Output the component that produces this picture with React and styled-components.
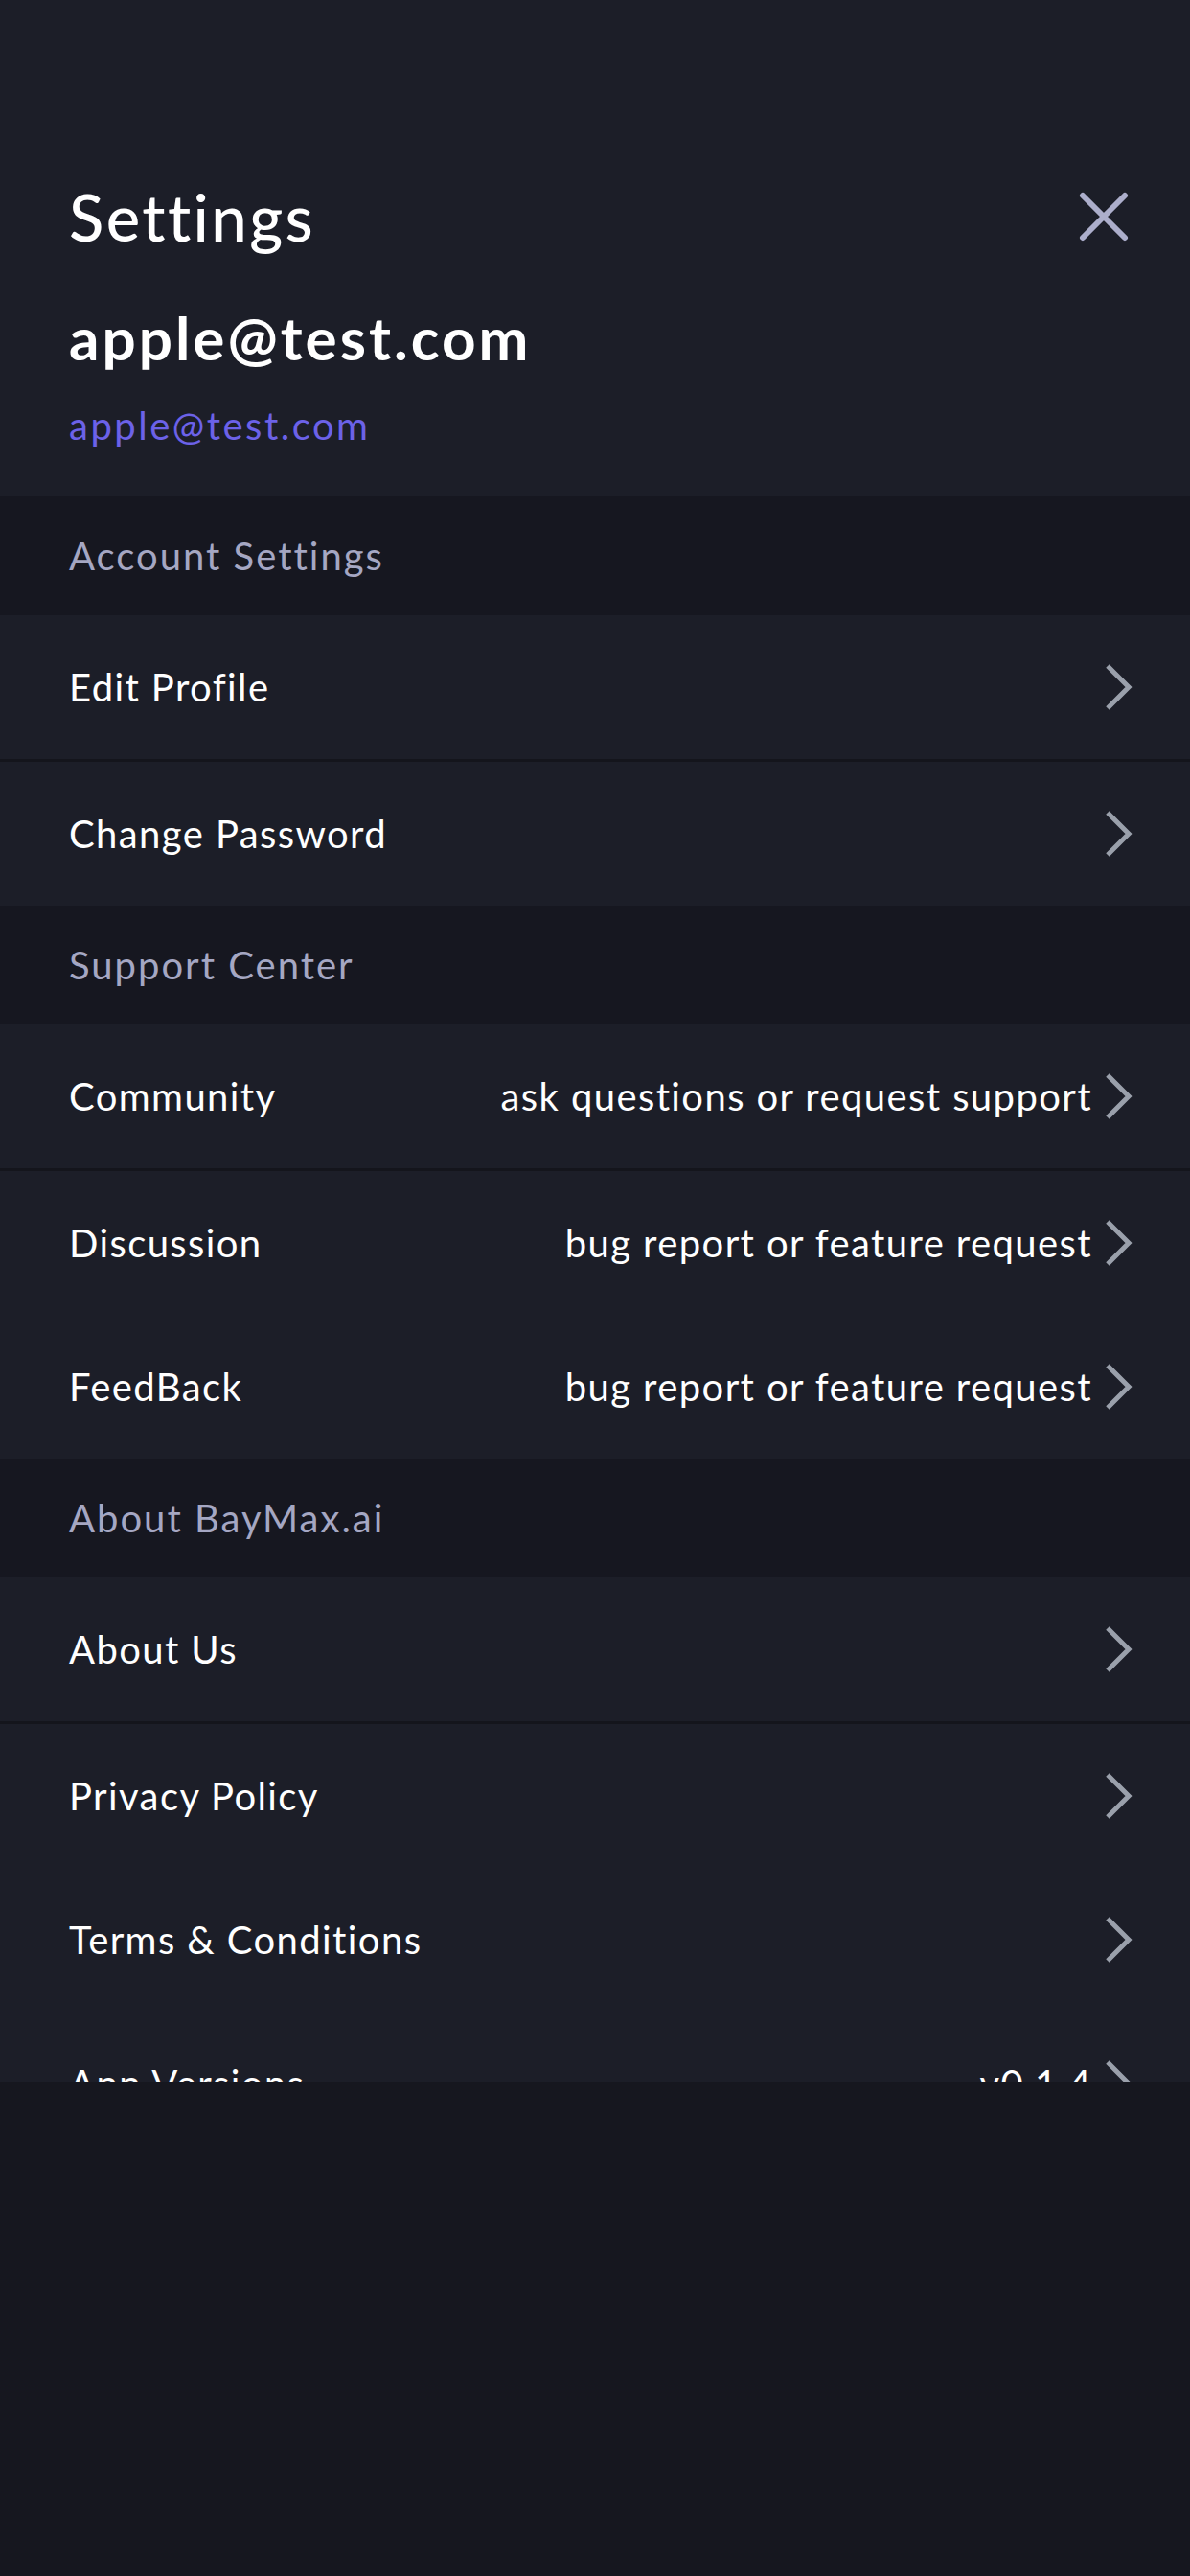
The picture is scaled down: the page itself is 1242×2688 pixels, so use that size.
import React from 'react';
import styled, { createGlobalStyle } from 'styled-components';

const GlobalStyle = createGlobalStyle`
  html, body {
    margin: 0;
    padding: 0;
    background: #16171f;
  }
  body {
    font-family: Lato, "Noto Sans", sans-serif;
    -webkit-font-smoothing: antialiased;
  }
`;

const Screen = styled.div`
  width: 1242px;
  height: 2688px;
  display: flex;
  flex-direction: column;
  background: #16171f;
`;

const ScrollArea = styled.div`
  height: 2172px;
  overflow: hidden;
  background: #1c1e28;
`;

const Header = styled.header`
  height: 518px;
  box-sizing: border-box;
  padding: 186px 60px 0 72px;
  background: #1c1e28;
`;

const TitleBar = styled.div`
  display: flex;
  align-items: center;
  justify-content: space-between;
`;

const Title = styled.h1`
  margin: 0;
  font-size: 67px;
  font-weight: 500;
  line-height: 80px;
  color: #ffffff;
  letter-spacing: 2.4px;
`;

const CloseButton = styled.button`
  width: 60px;
  height: 60px;
  padding: 0;
  border: none;
  background: none;
  display: flex;
  align-items: center;
  justify-content: center;
  color: #acaecb;
`;

const UserName = styled.div`
  margin-top: 50px;
  font-size: 62px;
  font-weight: 700;
  line-height: 72px;
  color: #ffffff;
  letter-spacing: 3px;
`;

const UserEmail = styled.div`
  margin-top: 30px;
  font-size: 40px;
  line-height: 52px;
  color: #6c62e8;
  letter-spacing: 2.5px;
`;

const SectionTitle = styled.div`
  height: 124px;
  box-sizing: border-box;
  padding: 0 72px;
  display: flex;
  align-items: center;
  background: #161720;
  font-size: 40px;
  color: #a5a7c3;
  letter-spacing: 2px;
`;

const Row = styled.div`
  box-sizing: border-box;
  padding: 0 60px 0 72px;
  display: flex;
  align-items: center;
  background: #1c1e28;
  border-bottom: ${({ $divider }) => ($divider ? '3px solid #14151c' : 'none')};
  height: ${({ $divider }) => ($divider ? '153px' : '150px')};
`;

const RowLabel = styled.span`
  flex: 1;
  font-size: 40px;
  color: #ffffff;
  white-space: nowrap;
  letter-spacing: 1.4px;
`;

const RowValue = styled.span`
  font-size: 40px;
  color: #ffffff;
  margin-right: 12px;
  white-space: nowrap;
  letter-spacing: 1.4px;
`;

const Chevron = () => (
  <svg width="30" height="48" viewBox="0 0 30 48" fill="none">
    <path d="M4 2 L26 24 L4 46" stroke="#9aa0ab" strokeWidth="5" />
  </svg>
);

const CloseIcon = () => (
  <svg width="52" height="52" viewBox="0 0 52 52" fill="none">
    <path d="M4 4 L48 48 M48 4 L4 48" stroke="currentColor" strokeWidth="6" strokeLinecap="round" />
  </svg>
);

const sections = [
  {
    title: 'Account Settings',
    items: [
      { label: 'Edit Profile', divider: true },
      { label: 'Change Password' },
    ],
  },
  {
    title: 'Support Center',
    items: [
      { label: 'Community', value: 'ask questions or request support', divider: true },
      { label: 'Discussion', value: 'bug report or feature request' },
      { label: 'FeedBack', value: 'bug report or feature request' },
    ],
  },
  {
    title: 'About BayMax.ai',
    items: [
      { label: 'About Us', divider: true },
      { label: 'Privacy Policy' },
      { label: 'Terms & Conditions' },
      { label: 'App Versions', value: 'v0.1.4' },
    ],
  },
];

const BottomArea = styled.div`
  flex: 1;
  background: #16171f;
`;

export default function App() {
  return (
    <>
      <GlobalStyle />
      <Screen>
        <ScrollArea>
          <Header>
            <TitleBar>
              <Title>Settings</Title>
              <CloseButton aria-label="close">
                <CloseIcon />
              </CloseButton>
            </TitleBar>
            <UserName>apple@test.com</UserName>
            <UserEmail>apple@test.com</UserEmail>
          </Header>
          {sections.map((section) => (
            <section key={section.title}>
              <SectionTitle>{section.title}</SectionTitle>
              {section.items.map((item) => (
                <Row key={item.label} $divider={item.divider}>
                  <RowLabel>{item.label}</RowLabel>
                  {item.value && <RowValue>{item.value}</RowValue>}
                  <Chevron />
                </Row>
              ))}
            </section>
          ))}
        </ScrollArea>
        <BottomArea />
      </Screen>
    </>
  );
}
